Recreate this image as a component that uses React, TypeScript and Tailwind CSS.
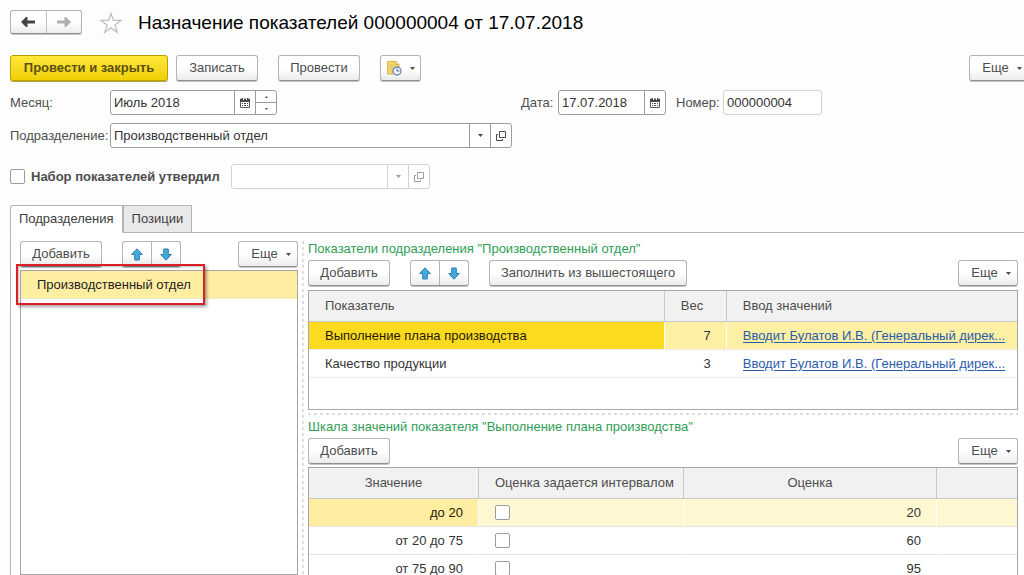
import { useState } from "react";
import type { ReactNode } from "react";
import clsx from "clsx";

interface Indicator {
  name: string;
  weight: number;
  source: string;
}

interface ScaleRow {
  value: string;
  score: number;
}

const indicators: Indicator[] = [
  {
    name: "Выполнение плана производства",
    weight: 7,
    source: "Вводит Булатов И.В. (Генеральный дирек...",
  },
  {
    name: "Качество продукции",
    weight: 3,
    source: "Вводит Булатов И.В. (Генеральный дирек...",
  },
];

const scale: ScaleRow[] = [
  { value: "до 20", score: 20 },
  { value: "от 20 до 75", score: 60 },
  { value: "от 75 до 90", score: 95 },
];

const buttonFace =
  "border border-[#b4b4b4] border-b-[#8f8f8f] bg-linear-to-b from-white from-50% to-[#ececec] shadow-[0_1px_0_#c4c4c4]";

function Caret({ className = "text-[#4a4a4a]" }: { className?: string }) {
  return (
    <svg width="5" height="3" viewBox="0 0 5 3" className={className}>
      <path d="M0 0h5L2.5 3z" fill="currentColor" />
    </svg>
  );
}

function CalendarIcon() {
  return (
    <svg width="10" height="10" viewBox="0 0 10 10">
      <path d="M0.5 1h9v8.5h-9z" fill="#fff" stroke="#5a5a5a" />
      <path d="M0 1h10v3H0z" fill="#4a4a4a" />
      <path d="M2 0h1v2H2zM7 0h1v2H7z" fill="#4a4a4a" />
      <path d="M3 0h1v2H3zM6 0h1v2H6z" fill="#fff" />
      <path
        d="M2 5h1v1H2zM4 5h2v1H4zM7 5h1v1H7zM2 7h1v1H2zM4 7h2v1H4zM7 7h1v1H7z"
        fill="#4a4a4a"
      />
    </svg>
  );
}

function OpenIcon() {
  return (
    <svg width="10" height="10" viewBox="0 0 10 10" fill="none" stroke="currentColor">
      <path d="M3.5 0.5h6v6h-6z" />
      <path d="M2 3.5H0.5v6h6V8" />
    </svg>
  );
}

function BlueArrow({ down = false }: { down?: boolean }) {
  return (
    <svg width="12" height="13" viewBox="0 0 12 13" className={down ? "rotate-180" : ""}>
      <path
        d="M6 0.8L11.3 6.5H8.3V12H3.7V6.5H0.7z"
        fill="#45a9de"
        stroke="#2c7fb0"
        strokeLinejoin="round"
      />
    </svg>
  );
}

function NavArrow({ forward = false }: { forward?: boolean }) {
  return (
    <svg
      width="14"
      height="10"
      viewBox="0 0 14 10"
      className={forward ? "rotate-180 text-[#b0b0b0]" : "text-[#444444]"}
    >
      <path d="M0 5L5 0h1.5v3.5H14v3H6.5V10H5z" fill="currentColor" />
    </svg>
  );
}

function HistoryIcon() {
  return (
    <svg width="16" height="16" viewBox="0 0 16 16">
      <path d="M1.5 1.5h8.5l3 3v9.5H1.5z" fill="#f3d675" stroke="#d9b44a" />
      <path d="M10 1.5v3h3" fill="#fbeebb" stroke="#d9b44a" />
      <path d="M3.5 5h5M3.5 7.5h4M3.5 10h3" stroke="#dfbd57" />
      <circle cx="11" cy="11" r="4" fill="#eef3fb" stroke="#6f8db9" strokeWidth="1.4" />
      <path d="M11 8.5V11h2.5" fill="none" stroke="#4d6f9f" />
    </svg>
  );
}

function Button({ children, className }: { children: ReactNode; className?: string }) {
  return (
    <button
      type="button"
      className={clsx(
        "flex h-[26px] items-center justify-center rounded-[3px] whitespace-nowrap text-[#4d4d4d]",
        buttonFace,
        className
      )}
    >
      {children}
    </button>
  );
}

function MoreButton({ className }: { className?: string }) {
  return (
    <Button className={clsx("w-[60px] shrink-0 gap-2 pl-1.5", className)}>
      Еще
      <Caret />
    </Button>
  );
}

function MoveButtons() {
  return (
    <div className={clsx("flex h-[26px] w-[59px] rounded-[3px]", buttonFace)}>
      <button
        type="button"
        aria-label="Переместить вверх"
        className="flex flex-1 items-center justify-center border-r border-[#b4b4b4]"
      >
        <BlueArrow />
      </button>
      <button
        type="button"
        aria-label="Переместить вниз"
        className="flex flex-1 items-center justify-center"
      >
        <BlueArrow down />
      </button>
    </div>
  );
}

interface FieldProps {
  id: string;
  label?: string;
  value: string;
  className?: string;
  muted?: boolean;
  children?: ReactNode;
}

function Field({ id, label, value, className, muted, children }: FieldProps) {
  const [text, setText] = useState(value);

  return (
    <div
      className={clsx(
        "flex h-[25px] overflow-hidden rounded-[3px] border bg-white",
        muted ? "border-[#d2d2d2]" : "border-[#9c9c9c]",
        className
      )}
    >
      <input
        id={id}
        type="text"
        aria-label={label}
        value={text}
        onChange={(e) => setText(e.target.value)}
        className="min-w-0 flex-1 px-[3px] text-[#333333] outline-none"
      />
      {children}
    </div>
  );
}

function FieldButton({
  label,
  muted,
  children,
}: {
  label: string;
  muted?: boolean;
  children: ReactNode;
}) {
  return (
    <button
      type="button"
      aria-label={label}
      className={clsx(
        "flex w-[21px] shrink-0 items-center justify-center border-l",
        muted ? "border-[#d2d2d2] text-[#9a9a9a]" : "border-[#9c9c9c] text-[#4a4a4a]"
      )}
    >
      {children}
    </button>
  );
}

function Checkbox({ id, label }: { id?: string; label?: string }) {
  return (
    <input
      id={id}
      type="checkbox"
      aria-label={label}
      className="block size-[15px] shrink-0 appearance-none rounded-[2px] border border-[#9c9c9c] bg-white checked:bg-[#4a4a4a]"
    />
  );
}

function Header() {
  return (
    <header className="flex items-start">
      <div className={clsx("flex h-6 w-[72px] rounded-[3px]", buttonFace)}>
        <button
          type="button"
          aria-label="Назад"
          className="flex flex-1 items-center justify-center border-r border-[#c4c4c4]"
        >
          <NavArrow />
        </button>
        <button
          type="button"
          aria-label="Вперед"
          className="flex flex-1 items-center justify-center"
        >
          <NavArrow forward />
        </button>
      </div>
      <button type="button" aria-label="Избранное" className="mt-0.5 ml-[18px]">
        <svg
          width="22"
          height="22"
          viewBox="0 0 22 22"
          fill="#fff"
          stroke="#bcbfc4"
          strokeWidth="1.3"
        >
          <path d="M11 1.500l2.400 6.900h7.600l-6.100 4.600 2.300 7.300L11 15.900l-6.200 4.400L7.100 13 1 8.400h7.600z" />
        </svg>
      </button>
      <h1 className="ml-4 text-[19px] leading-[26px] whitespace-nowrap text-black">
        Назначение показателей 000000004 от 17.07.2018
      </h1>
    </header>
  );
}

function CommandBar() {
  return (
    <div className="mt-[19px] flex">
      <button
        type="button"
        className="h-[26px] w-[158px] rounded-[3px] border border-[#b89f00] bg-linear-to-b from-[#ffe838] to-[#f0d000] font-bold whitespace-nowrap text-[#5a4f10] shadow-[0_1px_0_#b5a540]"
      >
        Провести и закрыть
      </button>
      <Button className="ml-2 w-[82px]">Записать</Button>
      <Button className="ml-5 w-[82px]">Провести</Button>
      <Button className="ml-5 w-[41px] gap-2">
        <HistoryIcon />
        <Caret />
      </Button>
      <MoreButton className="-mr-[5px] ml-auto" />
    </div>
  );
}

function FormFields() {
  return (
    <div className="text-[#4d4d4d]">
      <div className="mt-[9px] flex items-center">
        <label htmlFor="month" className="w-[100px] shrink-0">
          Месяц:
        </label>
        <Field id="month" value="Июль 2018" className="w-[167px]">
          <FieldButton label="Выбрать месяц">
            <CalendarIcon />
          </FieldButton>
          <div className="flex w-[21px] flex-col border-l border-[#9c9c9c]">
            <button
              type="button"
              aria-label="Следующий месяц"
              className="flex flex-1 items-center justify-center border-b border-[#9c9c9c]"
            >
              <svg width="3" height="2" viewBox="0 0 3 2">
                <path d="M0 2h3L1.5 0z" fill="#4a4a4a" />
              </svg>
            </button>
            <button
              type="button"
              aria-label="Предыдущий месяц"
              className="flex flex-1 items-center justify-center"
            >
              <svg width="3" height="2" viewBox="0 0 3 2">
                <path d="M0 0h3L1.5 2z" fill="#4a4a4a" />
              </svg>
            </button>
          </div>
        </Field>
        <div className="ml-[244px] flex items-center">
          <label htmlFor="date" className="w-[37px]">
            Дата:
          </label>
          <Field id="date" value="17.07.2018" className="w-[108px]">
            <FieldButton label="Выбрать дату">
              <CalendarIcon />
            </FieldButton>
          </Field>
          <label htmlFor="number" className="ml-2.5 w-[47px]">
            Номер:
          </label>
          <Field id="number" value="000000004" muted className="w-[99px]" />
        </div>
      </div>

      <div className="mt-2 flex items-center">
        <label htmlFor="department" className="w-[100px] shrink-0">
          Подразделение:
        </label>
        <Field id="department" value="Производственный отдел" className="w-[402px]">
          <FieldButton label="Выбрать подразделение">
            <Caret />
          </FieldButton>
          <FieldButton label="Открыть подразделение">
            <OpenIcon />
          </FieldButton>
        </Field>
      </div>

      <div className="mt-4 flex items-center">
        <Checkbox id="approved" />
        <label htmlFor="approved" className="ml-1.5 w-[200px] font-bold whitespace-nowrap">
          Набор показателей утвердил
        </label>
        <Field id="approver" label="Утвердил" value="" muted className="w-[199px]">
          <FieldButton label="Выбрать сотрудника" muted>
            <Caret className="text-[#9a9a9a]" />
          </FieldButton>
          <FieldButton label="Открыть сотрудника" muted>
            <OpenIcon />
          </FieldButton>
        </Field>
      </div>
    </div>
  );
}

function Departments() {
  return (
    <section className="flex w-[278px] shrink-0 flex-col">
      <div className="flex">
        <Button className="w-[82px]">Добавить</Button>
        <div className="ml-5">
          <MoveButtons />
        </div>
        <MoreButton className="ml-auto" />
      </div>
      <ul className="mt-[3px] flex-1 border border-[#a6a6a6] bg-white">
        <li className="relative">
          <button
            type="button"
            className="block h-7 w-full border-b border-[#f6efc6] bg-[#ffeea2] pl-4 text-left text-[#1f1f1f]"
          >
            Производственный отдел
          </button>
          <span className="pointer-events-none absolute -top-[7px] -left-[5px] h-[41px] w-[189px] border-2 border-[#dc1f26] shadow-[2px_2px_3px_rgba(0,0,0,0.35),inset_1px_1px_2px_rgba(0,0,0,0.25)]" />
        </li>
      </ul>
    </section>
  );
}

const headCell =
  "h-[31px] border-r border-b border-[#c8c8c8] px-4 font-normal whitespace-nowrap last:border-r-0";

function IndicatorsTable() {
  return (
    <div className="mt-1 h-[120px] shrink-0 border border-[#a6a6a6] bg-white">
      <table className="w-full table-fixed border-separate border-spacing-0">
        <colgroup>
          <col />
          <col className="w-[62px]" />
          <col className="w-[41%]" />
        </colgroup>
        <thead className="bg-[#f1f1f1] text-left text-[#4d4d4d]">
          <tr>
            <th className={headCell}>Показатель</th>
            <th className={headCell}>Вес</th>
            <th className={headCell}>Ввод значений</th>
          </tr>
        </thead>
        <tbody>
          {indicators.map((item, i) => {
            const active = i === 0;
            const cell = "h-7 border-r border-b border-r-transparent border-b-[#ececec]";
            return (
              <tr key={item.name} className="text-[#333333]">
                <td
                  className={clsx(
                    cell,
                    "bg-clip-padding px-4",
                    active && "bg-[#fbda1f] text-[#1f1a00]"
                  )}
                >
                  {item.name}
                </td>
                <td
                  className={clsx(
                    cell,
                    "bg-clip-padding pr-[15px] text-right",
                    active && "bg-[#fdf0a4]"
                  )}
                >
                  {item.weight}
                </td>
                <td className={clsx(cell, "pr-2 pl-4", active && "bg-[#fdf0a4]")}>
                  <a
                    href="#source"
                    className="block truncate text-[#2b5cab] underline underline-offset-2"
                  >
                    {item.source}
                  </a>
                </td>
              </tr>
            );
          })}
        </tbody>
      </table>
    </div>
  );
}

function ScaleTable() {
  return (
    <div className="mt-[3px] flex-1 border border-[#a6a6a6] bg-white">
      <table className="w-full table-fixed border-separate border-spacing-0">
        <colgroup>
          <col className="w-[24%]" />
          <col className="w-[205px]" />
          <col />
          <col className="w-[80px]" />
        </colgroup>
        <thead className="bg-[#f1f1f1] text-[#4d4d4d]">
          <tr>
            <th className={headCell}>Значение</th>
            <th className={clsx(headCell, "text-left")}>Оценка задается интервалом</th>
            <th className={headCell}>Оценка</th>
            <th className={headCell} aria-label="Дополнительно" />
          </tr>
        </thead>
        <tbody>
          {scale.map((row, i) => {
            const active = i === 0;
            const cell =
              "h-7 border-r border-b border-r-transparent border-b-[#e4e4e4] bg-clip-padding last:border-r-0";
            return (
              <tr key={row.value} className="text-[#333333]">
                <td
                  className={clsx(
                    cell,
                    "pr-[15px] text-right",
                    active && "bg-[#ffeea2] text-[#1f1a00]"
                  )}
                >
                  {row.value}
                </td>
                <td className={clsx(cell, "px-4", active && "bg-[#fff7d2]")}>
                  <Checkbox label={`Оценка задается интервалом: ${row.value}`} />
                </td>
                <td className={clsx(cell, "pr-[15px] text-right", active && "bg-[#fff7d2]")}>
                  {row.score}
                </td>
                <td className={clsx(cell, active && "bg-[#fff7d2]")} />
              </tr>
            );
          })}
        </tbody>
      </table>
    </div>
  );
}

function Details() {
  return (
    <section className="flex min-w-0 flex-1 flex-col">
      <h2 className="h-[19px] shrink-0 leading-4 whitespace-nowrap text-[#2f9e57]">
        Показатели подразделения "Производственный отдел"
      </h2>
      <div className="flex shrink-0">
        <Button className="w-[82px]">Добавить</Button>
        <div className="ml-5">
          <MoveButtons />
        </div>
        <Button className="ml-5 w-[198px]">Заполнить из вышестоящего</Button>
        <MoreButton className="ml-auto" />
      </div>
      <IndicatorsTable />

      <div className="mt-[3px] h-0.5 shrink-0 bg-[repeating-linear-gradient(90deg,#dedede_0_3px,transparent_3px_6px)]" />

      <h2 className="mt-1 h-[19px] shrink-0 leading-4 whitespace-nowrap text-[#2f9e57]">
        Шкала значений показателя "Выполнение плана производства"
      </h2>
      <div className="flex shrink-0 justify-between">
        <Button className="w-[82px]">Добавить</Button>
        <MoreButton />
      </div>
      <ScaleTable />
    </section>
  );
}

const tabs = ["Подразделения", "Позиции"];

export default function App() {
  const [tab, setTab] = useState(tabs[0]);

  return (
    <div className="flex h-screen flex-col overflow-hidden bg-[#fdfdfd] pt-2.5 pl-2.5 font-['Liberation_Sans',Arial,sans-serif] text-[13px] leading-4">
      <Header />
      <CommandBar />
      <FormFields />

      <div role="tablist" className="mt-4 flex shrink-0">
        {tabs.map((name) => (
          <button
            key={name}
            type="button"
            role="tab"
            aria-selected={tab === name}
            onClick={() => setTab(name)}
            className={clsx(
              "h-7 border border-[#b4b4b4] px-2 text-[#404040] first:rounded-tl-[3px] last:rounded-tr-[3px] last:border-l-0",
              tab === name ? "border-b-white bg-white" : "bg-[#e9e9e9]"
            )}
          >
            {name}
          </button>
        ))}
        <div className="flex-1 border-b border-[#b4b4b4]" />
      </div>

      <main className="flex min-h-0 flex-1 border-l border-[#b4b4b4] bg-white pt-2 pr-1.5 pl-[9px]">
        <Departments />
        <div className="mx-1 w-0.5 shrink-0 bg-[repeating-linear-gradient(180deg,#dedede_0_3px,transparent_3px_6px)]" />
        <Details />
      </main>
    </div>
  );
}
